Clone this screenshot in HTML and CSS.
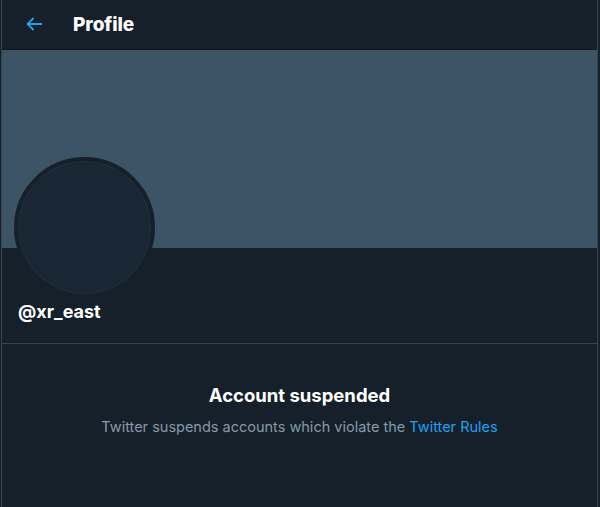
FILE: index.html
```html
<!DOCTYPE html>
<html lang="en">
<head>
  <meta charset="UTF-8">
  <title>Profile</title>
  <link rel="stylesheet" href="styles.css">
</head>
<body>
  <div class="column">
    <div class="header">
      <svg class="back" viewBox="0 0 24 24" width="22" height="22">
        <path d="M20 11H7.414l4.293-4.293a1 1 0 0 0-1.414-1.414l-6 6a1 1 0 0 0 0 1.414l6 6a1 1 0 0 0 1.414-1.414L7.414 13H20a1 1 0 0 0 0-2z"/>
      </svg>
      <h2>Profile</h2>
    </div>

    <div class="banner"></div>

    <div class="profile">
      <div class="avatar"></div>
      <div class="handle">@xr_east</div>
    </div>

    <div class="suspended">
      <h3>Account suspended</h3>
      <p>Twitter suspends accounts which violate the <a href="#">Twitter Rules</a></p>
    </div>
  </div>
</body>
</html>
```

FILE: styles.css
```css
html, body {
  margin: 0;
  height: 100%;
}

body {
  background-color: #15202b;
  font-family: 'Inter', 'Liberation Sans', sans-serif;
  color: #fff;
}

.column {
  margin-left: 1px;
  width: 595px;
  min-height: 100%;
  border-left: 1px solid #38444d;
  border-right: 1px solid #38444d;
}

.header {
  height: 49px;
  display: flex;
  align-items: center;
  border-bottom: 1px solid #10171e;
}

.back {
  fill: #1da1f2;
  margin-left: 21px;
  margin-right: 28px;
  margin-top: -1px;
}

.header h2 {
  margin: 0;
  font-size: 19px;
  font-weight: 800;
  letter-spacing: -0.1px;
}

.banner {
  height: 198px;
  background-color: #3d5466;
}

.profile {
  display: flex;
  flex-direction: column;
  align-items: flex-start;
  padding: 0 16px;
  height: 95px;
  border-bottom: 1px solid #38444d;
}

.avatar {
  width: 133px;
  height: 133px;
  margin-top: -91px;
  margin-left: -4px;
  border-radius: 50%;
  background-color: #192734;
  border: 4px solid #15202b;
  box-shadow: inset 0 0 0 1px #22303d;
}

.handle {
  margin-top: 3px;
  font-size: 18px;
  font-weight: 700;
}

.suspended {
  text-align: center;
  padding-top: 40px;
}

.suspended h3 {
  margin: 0 0 12px;
  font-size: 18.5px;
  font-weight: 700;
}

.suspended p {
  margin: 0;
  font-size: 14.5px;
  color: #8899a6;
}

.suspended a {
  color: #1da1f2;
  text-decoration: none;
}
```
